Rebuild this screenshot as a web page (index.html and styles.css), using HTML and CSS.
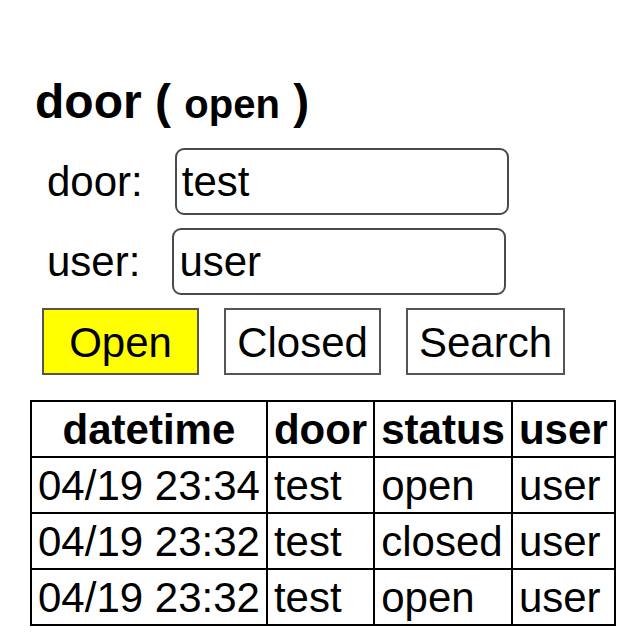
FILE: index.html
```html
<!DOCTYPE html>
<html>
<head>
<meta charset="utf-8">
<link rel="stylesheet" href="styles.css">
</head>
<body>
<main class="page">
  <h1 class="title">door ( <span class="title-state">open</span> )</h1>
  <form class="form">
    <div class="field field-door">
      <label class="field-label">door:</label>
      <input class="field-input" type="text" value="test">
    </div>
    <div class="field field-user">
      <label class="field-label">user:</label>
      <input class="field-input" type="text" value="user">
    </div>
    <div class="actions">
      <button type="button" class="btn btn-active">Open</button>
      <button type="button" class="btn">Closed</button>
      <button type="button" class="btn">Search</button>
    </div>
  </form>
  <table class="log">
    <thead>
      <tr><th>datetime</th><th>door</th><th>status</th><th>user</th></tr>
    </thead>
    <tbody>
      <tr><td>04/19 23:34</td><td>test</td><td>open</td><td>user</td></tr>
      <tr><td>04/19 23:32</td><td>test</td><td>closed</td><td>user</td></tr>
      <tr><td>04/19 23:32</td><td>test</td><td>open</td><td>user</td></tr>
    </tbody>
  </table>
</main>
</body>
</html>
```

FILE: styles.css
```css
html, body {
  margin: 0;
  padding: 0;
  background: #ffffff;
}
body {
  font-family: "Liberation Sans", Arial, sans-serif;
  color: #000;
}
.page {
  padding-top: 74px;
  display: flex;
  flex-direction: column;
  align-items: flex-start;
}
.title {
  margin: 0 0 0 35px;
  font-size: 48px;
  line-height: 56px;
  font-weight: bold;
}
.title-state {
  font-size: 40px;
}
.form {
  margin-top: 16px;
  display: flex;
  flex-direction: column;
  gap: 13px;
}
.field {
  display: flex;
  align-items: center;
  margin-left: 47px;
}
.field-label {
  font-size: 42px;
  line-height: 48px;
  margin-right: 32px;
}
.field-input {
  box-sizing: border-box;
  width: 334px;
  height: 67px;
  border: 2px solid #4a4a4a;
  border-radius: 9px;
  padding: 0 5px;
  font-family: "Liberation Sans", Arial, sans-serif;
  font-size: 42px;
  color: #000;
  background: #fff;
  outline: none;
}
.actions {
  display: flex;
  gap: 25px;
  margin-left: 42px;
}
.btn {
  box-sizing: border-box;
  min-width: 157px;
  height: 67px;
  padding: 3px 11px 0;
  border: 2px solid #555;
  border-radius: 0;
  background: #fff;
  font-family: "Liberation Sans", Arial, sans-serif;
  font-size: 42px;
  color: #000;
  text-align: center;
}
.btn-active {
  background: #ffff00;
}
.log {
  margin: 25px 0 0 30px;
  border-collapse: collapse;
  border: 2px solid #000;
  font-size: 42px;
}
.log th,
.log td {
  border: 2px solid #000;
  padding: 2px 6px 0;
  line-height: 52px;
  text-align: left;
  white-space: nowrap;
}
.log th {
  text-align: center;
  font-weight: bold;
}
```
